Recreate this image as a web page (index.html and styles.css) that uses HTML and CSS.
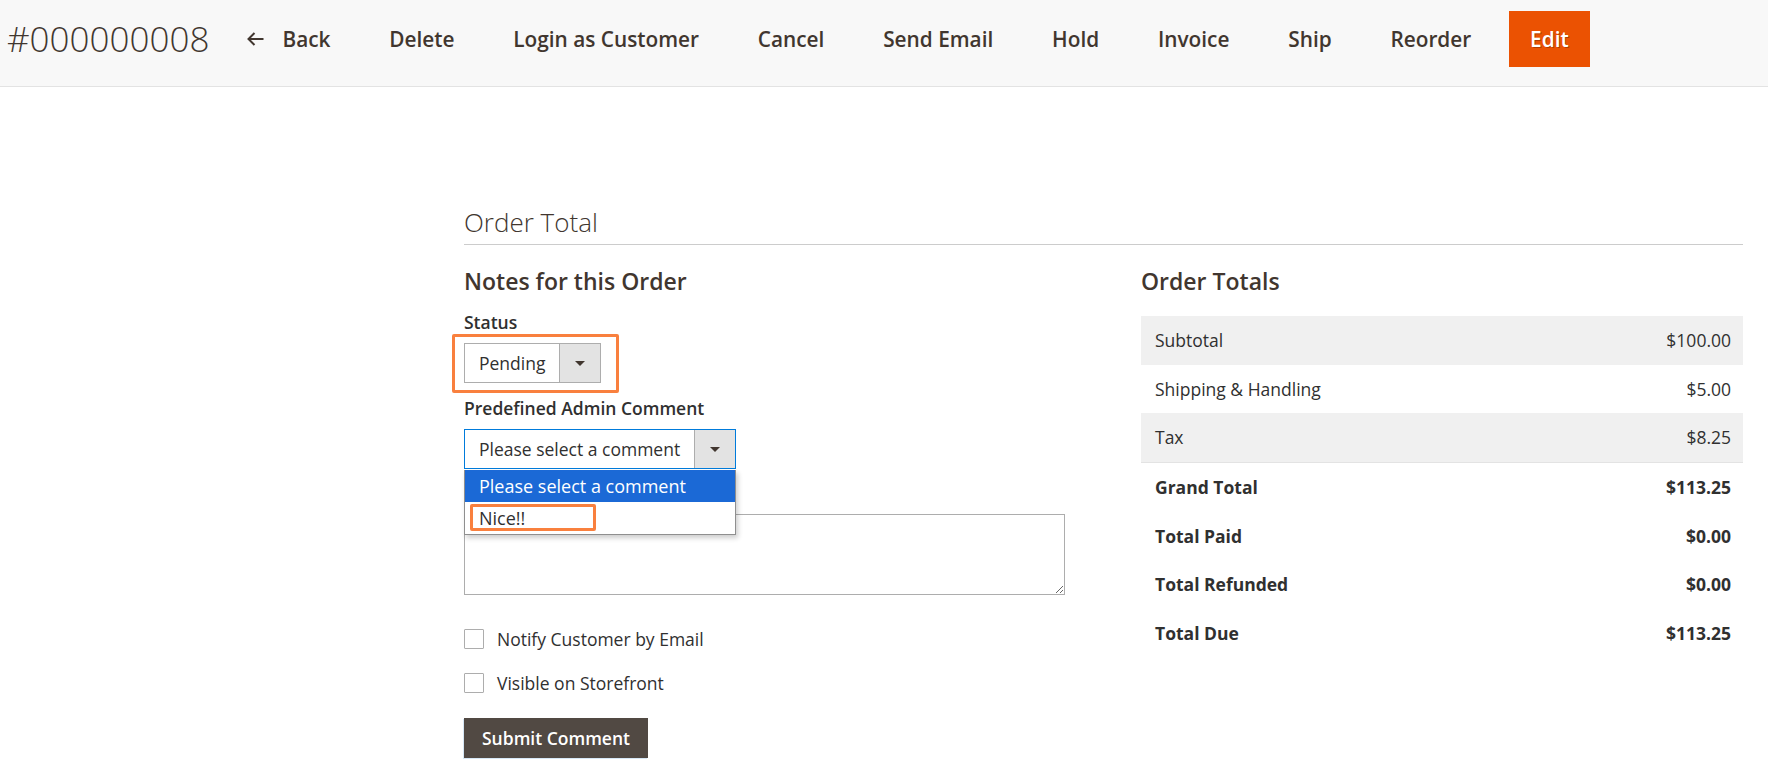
FILE: index.html
```html
<!DOCTYPE html>
<html lang="en">
<head>
  <meta charset="UTF-8" />
  <title>#000000008 / Orders</title>
  <link rel="stylesheet" href="styles.css">
</head>
<body>
  <header class="page-actions">
    <h1 class="page-title">#000000008</h1>
    <button class="action action-back">
      <svg width="17" height="14" viewBox="0 0 17 14"><path d="M16.5 7H2M7.5 1L1.5 7l6 6" fill="none" stroke="#41362f" stroke-width="2"/></svg>
      Back
    </button>
    <button class="action">Delete</button>
    <button class="action">Login as Customer</button>
    <button class="action">Cancel</button>
    <button class="action">Send Email</button>
    <button class="action">Hold</button>
    <button class="action">Invoice</button>
    <button class="action">Ship</button>
    <button class="action">Reorder</button>
    <button class="action action-primary">Edit</button>
  </header>

  <main class="page-main">
    <h2 class="section-title">Order Total</h2>

    <div class="columns">
      <section class="history">
        <h3 class="block-title">Notes for this Order</h3>

        <div class="field">
          <div class="field-label">Status</div>
          <div class="select-wrap">
            <div class="select select-status">
              <span class="select-value">Pending</span>
              <span class="select-arrow"></span>
            </div>
            <span class="mark mark-status"></span>
          </div>
        </div>

        <div class="field">
          <div class="field-label">Predefined Admin Comment</div>
          <div class="select-wrap">
            <div class="select select-comment is-open">
              <span class="select-value">Please select a comment</span>
              <span class="select-arrow"></span>
            </div>
            <ul class="dropdown">
              <li class="option is-active">Please select a comment</li>
              <li class="option">Nice!!<span class="mark mark-option"></span></li>
            </ul>
          </div>
        </div>

        <div class="field field-comment">
          <textarea class="comment" aria-label="Comment"></textarea>
        </div>

        <div class="checks">
          <label class="check"><span class="checkbox"></span>Notify Customer by Email</label>
          <label class="check"><span class="checkbox"></span>Visible on Storefront</label>
        </div>

        <button class="submit">Submit Comment</button>
      </section>

      <section class="totals">
        <h3 class="block-title">Order Totals</h3>
        <div class="totals-table">
          <div class="row row-shade"><span>Subtotal</span><span>$100.00</span></div>
          <div class="row"><span>Shipping &amp; Handling</span><span>$5.00</span></div>
          <div class="row row-shade row-last"><span>Tax</span><span>$8.25</span></div>
          <div class="row row-strong"><span>Grand Total</span><span>$113.25</span></div>
          <div class="row row-strong"><span>Total Paid</span><span>$0.00</span></div>
          <div class="row row-strong"><span>Total Refunded</span><span>$0.00</span></div>
          <div class="row row-strong"><span>Total Due</span><span>$113.25</span></div>
        </div>
      </section>
    </div>
  </main>
</body>
</html>
```

FILE: styles.css
```css
* {
  box-sizing: border-box;
}

body {
  margin: 0;
  font-family: 'Open Sans', 'Liberation Sans', sans-serif;
  font-size: 17.5px;
  color: #303030;
  background: #fff;
}

/* top bar */
.page-actions {
  display: flex;
  align-items: center;
  height: 87px;
  padding: 11px 0 19px 7px;
  background: #f8f8f8;
  border-bottom: 1px solid #e3e3e3;
}

.page-title {
  margin: 0 17px 0 0;
  font-size: 35px;
  font-weight: 300;
  line-height: 56px;
  color: #41362f;
}

.action {
  display: flex;
  align-items: center;
  gap: 18px;
  height: 56px;
  padding: 0 21px;
  margin-right: 16.8px;
  border: none;
  background: none;
  font-family: inherit;
  font-size: 20.8px;
  font-weight: 600;
  color: #41362f;
  cursor: pointer;
}

.action-primary {
  padding: 0 21px;
  background: #eb5202;
  color: #fff;
  text-shadow: 1px 1px 0 rgba(0, 0, 0, 0.25);
}

/* content */
.page-main {
  padding: 120px 25px 40px 464px;
}

.section-title {
  margin: 0;
  padding-bottom: 6px;
  font-size: 26px;
  font-weight: 300;
  line-height: 31px;
  color: #41362f;
  border-bottom: 1px solid #ccc;
}

.columns {
  display: grid;
  grid-template-columns: 1fr 602px;
  column-gap: 76px;
}

.block-title {
  margin: 22px 0 15px;
  font-size: 23px;
  font-weight: 600;
  line-height: 28px;
  color: #41362f;
}

.field {
  margin-bottom: 12.5px;
}

.field-comment {
  padding-top: 33px;
}

.field-label {
  margin-bottom: 9px;
  font-weight: 600;
  line-height: 24px;
}

.select-wrap {
  position: relative;
  display: inline-block;
}

.select {
  display: flex;
  height: 40px;
  border: 1px solid #adadad;
  background: #fff;
}

.select-status {
  width: 137px;
}

.select-comment {
  width: 272px;
}

.select.is-open {
  border-color: #007bdb;
}

.select-value {
  flex: 1;
  padding-left: 14px;
  line-height: 38px;
  white-space: nowrap;
}

.select-arrow {
  position: relative;
  flex: 0 0 41px;
  background: #e3e3e3;
  border-left: 1px solid #adadad;
}

.select-arrow::after {
  content: "";
  position: absolute;
  top: 17px;
  left: 15px;
  border-top: 5px solid #41362f;
  border-left: 5px solid transparent;
  border-right: 5px solid transparent;
}

.dropdown {
  position: absolute;
  top: 100%;
  left: 0;
  z-index: 2;
  width: 272px;
  margin: 1px 0 0;
  padding: 0;
  list-style: none;
  background: #fff;
  border: 1px solid #8f8f8f;
  border-top: 0;
  box-shadow: 2px 3px 5px rgba(0, 0, 0, 0.2);
}

.option {
  position: relative;
  height: 32px;
  padding-left: 14px;
  font-size: 18px;
  line-height: 32px;
}

.option.is-active {
  background: #1b69d6;
  color: #fff;
}

/* orange annotation boxes */
.mark {
  position: absolute;
  border: 3px solid #f9803e;
  border-radius: 2px;
}

.mark-status {
  top: -9px;
  left: -12px;
  width: 167px;
  height: 59px;
}

.mark-option {
  top: 2px;
  left: 5px;
  width: 126px;
  height: 27px;
}

.comment {
  display: block;
  width: 100%;
  height: 81px;
  border: 1px solid #adadad;
  font-family: inherit;
  font-size: 17.5px;
}

.checks {
  display: flex;
  flex-direction: column;
  gap: 20px;
  margin: 32px 0 23px;
}

.check {
  display: flex;
  align-items: center;
  height: 24px;
  line-height: 24px;
}

.checkbox {
  width: 20px;
  height: 20px;
  margin-right: 13px;
  border: 1px solid #adadad;
  border-radius: 1px;
  background: #fff;
}

.submit {
  height: 40px;
  padding: 0 18px;
  border: none;
  background: #514943;
  color: #fff;
  font-family: inherit;
  font-size: 17.5px;
  font-weight: 600;
  box-shadow: -1px 1px 0 #d6e7f6;
}

/* totals */
.totals-table {
  margin-top: 21px;
}

.row {
  display: flex;
  justify-content: space-between;
  align-items: center;
  height: 48.6px;
  padding: 0 12px 0 14px;
}

.row-shade {
  background: #f0f0f0;
}

.row-last {
  height: 49.6px;
  border-bottom: 1px solid #e3e3e3;
}

.row-strong {
  font-weight: 700;
}
```
